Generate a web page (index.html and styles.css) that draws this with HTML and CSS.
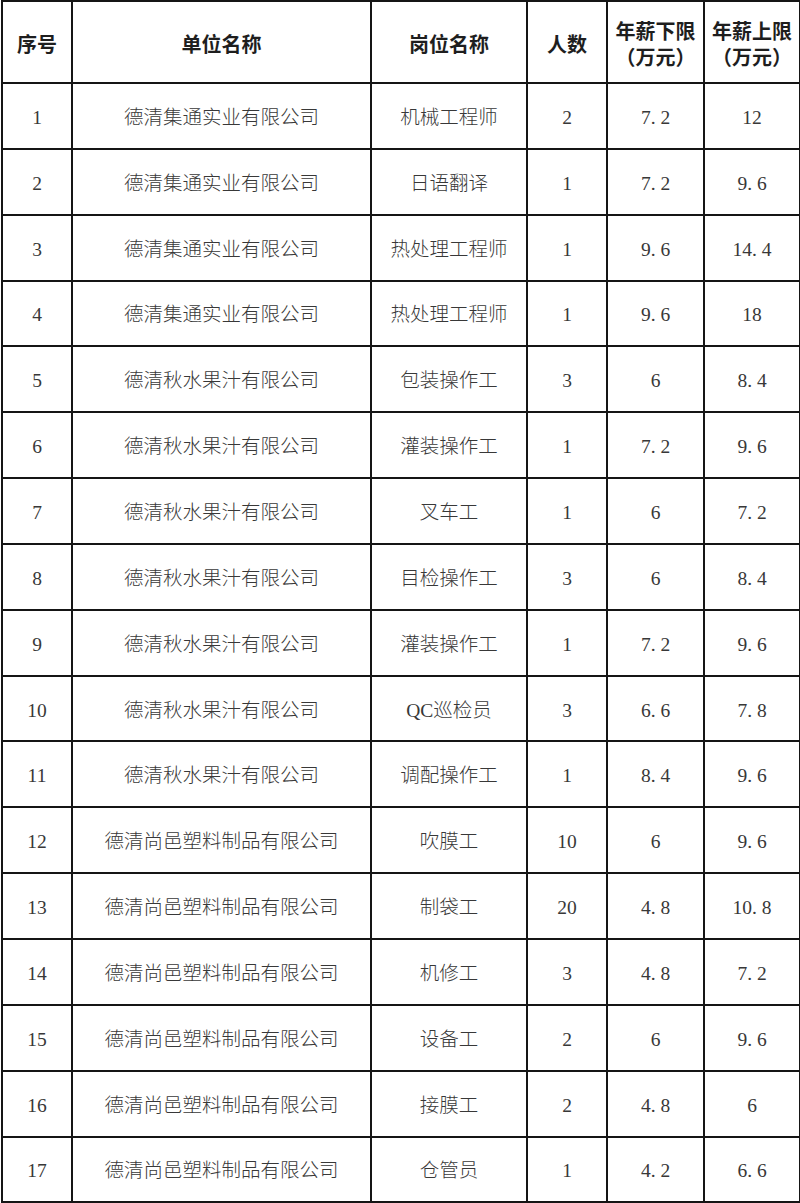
FILE: index.html
```html
<!DOCTYPE html>
<html lang="zh-CN">
<head>
<meta charset="utf-8">
<title>岗位表</title>
<link rel="stylesheet" href="styles.css">
</head>
<body>
<table class="jobs">
  <colgroup>
    <col class="c-no">
    <col class="c-org">
    <col class="c-pos">
    <col class="c-num">
    <col class="c-min">
    <col class="c-max">
  </colgroup>
  <thead>
    <tr class="head">
      <th>序号</th>
      <th>单位名称</th>
      <th>岗位名称</th>
      <th>人数</th>
      <th>年薪下限<br>（万元）</th>
      <th>年薪上限<br>（万元）</th>
    </tr>
  </thead>
  <tbody>
    <tr><td>1</td><td>德清集通实业有限公司</td><td>机械工程师</td><td>2</td><td>7<span class="dot">.</span>2</td><td>12</td></tr>
    <tr><td>2</td><td>德清集通实业有限公司</td><td>日语翻译</td><td>1</td><td>7<span class="dot">.</span>2</td><td>9<span class="dot">.</span>6</td></tr>
    <tr><td>3</td><td>德清集通实业有限公司</td><td>热处理工程师</td><td>1</td><td>9<span class="dot">.</span>6</td><td>14<span class="dot">.</span>4</td></tr>
    <tr><td>4</td><td>德清集通实业有限公司</td><td>热处理工程师</td><td>1</td><td>9<span class="dot">.</span>6</td><td>18</td></tr>
    <tr><td>5</td><td>德清秋水果汁有限公司</td><td>包装操作工</td><td>3</td><td>6</td><td>8<span class="dot">.</span>4</td></tr>
    <tr><td>6</td><td>德清秋水果汁有限公司</td><td>灌装操作工</td><td>1</td><td>7<span class="dot">.</span>2</td><td>9<span class="dot">.</span>6</td></tr>
    <tr><td>7</td><td>德清秋水果汁有限公司</td><td>叉车工</td><td>1</td><td>6</td><td>7<span class="dot">.</span>2</td></tr>
    <tr><td>8</td><td>德清秋水果汁有限公司</td><td>目检操作工</td><td>3</td><td>6</td><td>8<span class="dot">.</span>4</td></tr>
    <tr><td>9</td><td>德清秋水果汁有限公司</td><td>灌装操作工</td><td>1</td><td>7<span class="dot">.</span>2</td><td>9<span class="dot">.</span>6</td></tr>
    <tr><td>10</td><td>德清秋水果汁有限公司</td><td>QC巡检员</td><td>3</td><td>6<span class="dot">.</span>6</td><td>7<span class="dot">.</span>8</td></tr>
    <tr><td>11</td><td>德清秋水果汁有限公司</td><td>调配操作工</td><td>1</td><td>8<span class="dot">.</span>4</td><td>9<span class="dot">.</span>6</td></tr>
    <tr><td>12</td><td>德清尚邑塑料制品有限公司</td><td>吹膜工</td><td>10</td><td>6</td><td>9<span class="dot">.</span>6</td></tr>
    <tr><td>13</td><td>德清尚邑塑料制品有限公司</td><td>制袋工</td><td>20</td><td>4<span class="dot">.</span>8</td><td>10<span class="dot">.</span>8</td></tr>
    <tr><td>14</td><td>德清尚邑塑料制品有限公司</td><td>机修工</td><td>3</td><td>4<span class="dot">.</span>8</td><td>7<span class="dot">.</span>2</td></tr>
    <tr><td>15</td><td>德清尚邑塑料制品有限公司</td><td>设备工</td><td>2</td><td>6</td><td>9<span class="dot">.</span>6</td></tr>
    <tr><td>16</td><td>德清尚邑塑料制品有限公司</td><td>接膜工</td><td>2</td><td>4<span class="dot">.</span>8</td><td>6</td></tr>
    <tr><td>17</td><td>德清尚邑塑料制品有限公司</td><td>仓管员</td><td>1</td><td>4<span class="dot">.</span>2</td><td>6<span class="dot">.</span>6</td></tr>
  </tbody>
</table>
</body>
</html>
```

FILE: styles.css
```css
html, body {
  margin: 0;
  padding: 0;
  background: #ffffff;
}

.jobs {
  border-collapse: collapse;
  table-layout: fixed;
  width: 798px;
  margin: 0 0 0 1px;
  font-family: "Liberation Serif", "Noto Sans CJK SC", serif;
  color: #383838;
}

.c-no { width: 70px; }
.c-org { width: 299px; }
.c-pos { width: 156px; }
.c-num { width: 80px; }
.c-min { width: 97px; }
.c-max { width: 96px; }

.jobs th,
.jobs td {
  border: 2px solid #151515;
  text-align: center;
  vertical-align: middle;
}

.jobs th {
  font-family: "Noto Sans CJK SC", sans-serif;
  font-weight: 700;
  font-size: 20px;
  line-height: 26px;
  padding: 4px 0 0;
  height: 76px;
  color: #1e1e1e;
}

.jobs td {
  font-size: 19.5px;
  font-weight: 300;
  padding: 4px 0 0;
  height: 59.85px;
  line-height: 24px;
}

.dot {
  display: inline-block;
  width: 0.5em;
  text-align: left;
}
```
